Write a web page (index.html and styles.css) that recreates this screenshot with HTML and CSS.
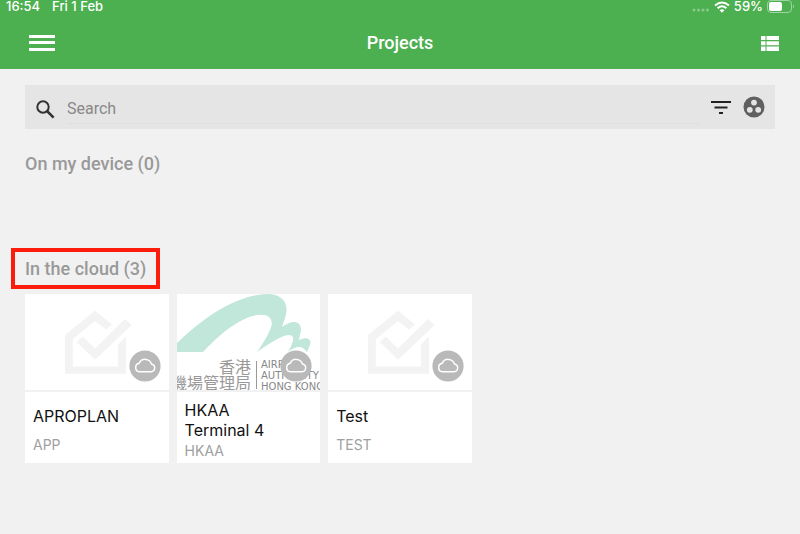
FILE: index.html
```html
<!DOCTYPE html>
<html lang="en">
<head>
  <meta charset="UTF-8">
  <meta name="viewport" content="width=device-width, initial-scale=1.0">
  <title>Projects</title>
  <link rel="stylesheet" href="styles.css">
</head>
<body>
  <!-- Shared shapes -->
  <svg class="defs" width="0" height="0" aria-hidden="true">
    <symbol id="house" viewBox="0 0 68 64">
      <path d="M0 25 L30 0.700 L47 14.500 L41 19.500 L30 11 L7.800 29 V56.500 H53 V34.500 L61 26.500 V63.700 H0 Z" fill="#f3f3f3"/>
      <path d="M11.700 32 L17.700 26.500 L30 38.500 L60 9 L66.700 15 L30 49.700 Z" fill="#f3f3f3"/>
    </symbol>
    <symbol id="cloud" viewBox="0 0 32 32">
      <circle cx="16" cy="16" r="15.600" fill="#b9b9b9"/>
      <path d="M10.500 21.800 H22 A4 4 0 0 0 22.500 13.900 A6.600 6.600 0 0 0 10.200 13.300 A4.300 4.300 0 0 0 10.500 21.800 Z" fill="none" stroke="#fff" stroke-width="1.500"/>
    </symbol>
  </svg>

  <header class="header">
    <div class="status">
      <span>16:54</span>
      <span>Fri 1 Feb</span>
      <div class="status-right">
        <svg class="signal" width="18" height="12" viewBox="0 0 18 12" fill="#8ccb8e">
          <circle cx="2" cy="9" r="1.500"/><circle cx="6.500" cy="9" r="1.500"/><circle cx="11" cy="9" r="1.500"/><circle cx="15.500" cy="9" r="1.500"/>
        </svg>
        <svg width="16" height="12" viewBox="0 0 16 12" fill="none" stroke="#fff" stroke-width="2">
          <path d="M1 4.500 Q8 -1.500 15 4.500"/>
          <path d="M3.600 7.200 Q8 3.400 12.400 7.200"/>
          <path d="M8 11.800 L5.600 9.200 Q8 7.400 10.400 9.200 Z" fill="#fff" stroke="none"/>
        </svg>
        <span>59%</span>
        <svg width="28" height="13" viewBox="0 0 28 13">
          <rect x="0.500" y="0.500" width="24" height="12" rx="3.500" fill="none" stroke="#a0d4a2"/>
          <rect x="2" y="2" width="13" height="9" rx="2" fill="#fff"/>
          <path d="M26 4.500 Q28 6.500 26 8.500 Z" fill="#a0d4a2"/>
        </svg>
      </div>
    </div>
    <div class="toolbar">
      <button class="icon-btn menu" type="button" aria-label="Menu">
        <svg width="26" height="18" viewBox="0 0 26 18" fill="#fff"><path d="M0 1h26v3H0zM0 7h26v3H0zM0 14h26v3H0z"/></svg>
      </button>
      <h1 class="title">Projects</h1>
      <button class="icon-btn end" type="button" aria-label="List view">
        <svg width="18" height="15" viewBox="0 0 18 15" fill="#fff"><path d="M0 0h4.500v4H0zM5.500 0H18v4H5.500zM0 5.200h4.500v4H0zM5.500 5.200H18v4H5.500zM0 10.500h4.500v4.500H0zM5.500 10.500H18v4.500H5.500z"/></svg>
      </button>
    </div>
  </header>

  <main class="content">
    <form class="search">
      <label class="search-label" for="search" aria-label="Search">
        <svg width="19" height="19" viewBox="0 0 19 19" fill="none" stroke="#333"><circle cx="7" cy="7" r="5.700" stroke-width="2"/><path d="M11 11 L17.600 17.600" stroke-width="2.500"/></svg>
      </label>
      <input class="search-input" type="text" id="search" placeholder="Search">
      <button class="icon-btn" type="button" aria-label="Filter">
        <svg width="20" height="13" viewBox="0 0 20 13" fill="#222"><path d="M0 0h20v2H0zM3.500 5.500h13v2h-13zM8 11h4v2H8z"/></svg>
      </button>
      <button class="icon-btn" type="button" aria-label="Group">
        <svg width="22" height="22" viewBox="0 0 22 22"><circle cx="11" cy="11" r="10.500" fill="#606060"/><g fill="#e5e5e5"><circle cx="11" cy="6.600" r="2.900"/><circle cx="6.800" cy="13.800" r="2.900"/><circle cx="15.200" cy="13.800" r="2.900"/></g></svg>
      </button>
    </form>

    <section class="device">
      <h2 class="heading">On my device (0)</h2>
    </section>

    <section>
      <h2 class="heading highlight">In the cloud (3)</h2>
      <div class="cards">
        <article class="card">
          <div class="thumb">
            <svg class="house" width="68" height="64"><use href="#house"/></svg>
            <svg class="badge" width="32" height="32"><use href="#cloud"/></svg>
          </div>
          <div class="info">
            <h3 class="name">APROPLAN</h3>
            <p class="code">APP</p>
          </div>
        </article>

        <article class="card">
          <div class="thumb">
            <svg class="logo" viewBox="0 0 144 96" preserveAspectRatio="xMinYMin slice">
              <path d="M0 49 C28 22 60 1 90 0 C106 0 113 10 108 24 L105 33 C116 25 124 27 124 36 L122 46 C130 42 135 45 133 51 L130 58 L126 54 Q120 51 111 58 Q117 48 116 43 Q112 35 80 58 Q94 38 95 29 Q94 19 80 21 C62 24 43 40 26 58 H0 Z" fill="#c0e7d9"/>
              <path d="M79.500 67 V95" stroke="#999" stroke-width="1"/>
              <g class="logo-cjk">
                <text x="42" y="79">香港</text>
                <text x="-6" y="95">機場管理局</text>
              </g>
              <g class="logo-latin">
                <text x="84" y="74">AIRPORT</text>
                <text x="84" y="85">AUTHORITY</text>
                <text x="84" y="96">HONG KONG</text>
              </g>
            </svg>
            <svg class="badge" width="32" height="32"><use href="#cloud"/></svg>
          </div>
          <div class="info">
            <h3 class="name">HKAA Terminal 4</h3>
            <p class="code">HKAA</p>
          </div>
        </article>

        <article class="card">
          <div class="thumb">
            <svg class="house" width="68" height="64"><use href="#house"/></svg>
            <svg class="badge" width="32" height="32"><use href="#cloud"/></svg>
          </div>
          <div class="info">
            <h3 class="name">Test</h3>
            <p class="code">TEST</p>
          </div>
        </article>
      </div>
    </section>
  </main>
</body>
</html>
```
FILE: styles.css
```css
* {
  box-sizing: border-box;
}

body {
  margin: 0;
  background: #f1f1f1;
  font-family: Inter, "Liberation Sans", sans-serif;
}

h1, h2, h3, p {
  margin: 0;
}

svg {
  display: block;
}

.defs {
  position: absolute;
}

/* Header */
.header {
  background: #4caf50;
  color: #fff;
}

.status {
  display: flex;
  align-items: center;
  gap: 12px;
  height: 13px;
  padding: 0 5px 0 6px;
  font-size: 13px;
  font-weight: 500;
  line-height: 13px;
}

.status-right {
  display: flex;
  align-items: center;
  gap: 4px;
  margin-left: auto;
}

.toolbar {
  display: grid;
  grid-template-columns: 1fr auto 1fr;
  align-items: center;
  height: 56px;
  padding: 4px 21px 0;
}

.title {
  font-family: Roboto, sans-serif;
  font-size: 18px;
  font-weight: 500;
  line-height: 24px;
}

.icon-btn {
  justify-self: start;
  padding: 0;
  border: none;
  background: none;
  cursor: pointer;
}

.icon-btn.menu {
  padding-left: 8px;
}

.icon-btn.end {
  justify-self: end;
}

/* Search */
.content {
  padding: 16px 25px;
}

.search {
  display: flex;
  align-items: center;
  gap: 12px;
  height: 44px;
  padding: 0 10px 0 11px;
  background: #e5e5e5;
}

.search-label {
  padding-top: 4px;
}

.search-input {
  flex: 1;
  height: 33px;
  padding: 4px 0 0;
  border: none;
  border-bottom: 1px solid #dfdfdf;
  outline: none;
  background: none;
  color: #333;
  font-family: Roboto, sans-serif;
  font-size: 16px;
}

.search-input::placeholder {
  color: #888;
}

/* Sections */
.device {
  height: 119px;
  padding-top: 24px;
}

.heading {
  color: #999;
  font-family: Roboto, sans-serif;
  font-size: 18px;
  font-weight: 500;
  line-height: 21px;
}

.highlight {
  width: fit-content;
  margin: 0 0 5px -14px;
  padding: 6px 10px;
  border: 4px solid #fb1c0c;
}

/* Cards */
.cards {
  display: grid;
  grid-template-columns: repeat(5, 1fr);
  gap: 8px;
}

.card {
  background: #fff;
}

.thumb {
  position: relative;
  height: 98px;
  border-bottom: 2px solid #f1f1f1;
  overflow: hidden;
}

.house {
  margin: 16px 0 0 40px;
}

.logo {
  width: 100%;
  height: 96px;
}

.logo-cjk {
  fill: #999;
  font-family: "Noto Sans CJK TC", sans-serif;
  font-size: 16px;
}

.logo-latin {
  fill: #888;
  font-family: "DejaVu Sans", sans-serif;
  font-size: 10px;
}

.badge {
  position: absolute;
  right: 8px;
  bottom: 8px;
}

.info {
  display: flex;
  flex-direction: column;
  justify-content: space-evenly;
  height: 71px;
  padding: 5px 24px 0 8px;
}

.name {
  color: #111;
  font-size: 16px;
  font-weight: 400;
  line-height: 20px;
}

.code {
  color: #a0a0a0;
  font-size: 14px;
  line-height: 18px;
}
```
